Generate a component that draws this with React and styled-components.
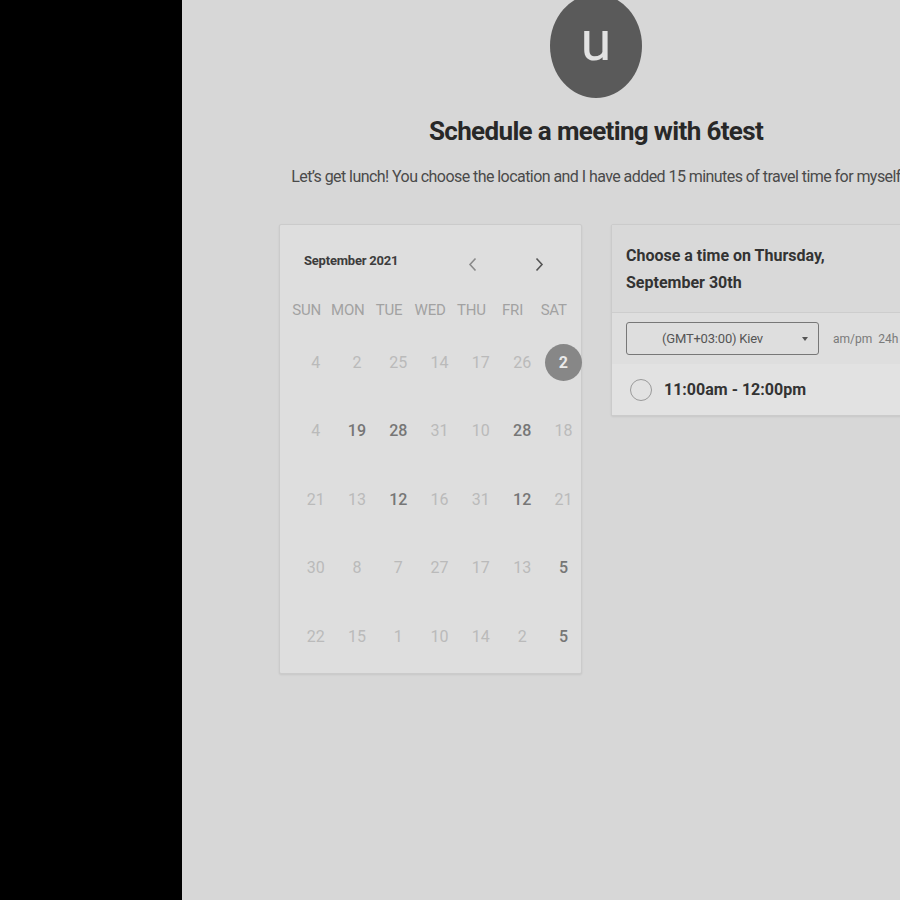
import React from "react";
import styled, { createGlobalStyle } from "styled-components";

const GlobalStyle = createGlobalStyle`
  html, body {
    margin: 0;
    padding: 0;
    background: #d7d7d7;
    overflow: hidden;
    font-family: Roboto, "Liberation Sans", sans-serif;
  }
`;

const Page = styled.div`
  display: flex;
  width: 1010px;
  height: 900px;
`;

const Sidebar = styled.div`
  width: 182px;
  flex-shrink: 0;
  background: #000;
`;

const Main = styled.div`
  width: 828px;
  display: flex;
  flex-direction: column;
  align-items: center;
`;

const Avatar = styled.div`
  width: 92px;
  height: 104px;
  margin-top: -6px;
  border-radius: 50%;
  background: #5a5a5a;
  color: #e2e2e2;
  display: flex;
  align-items: center;
  justify-content: center;
  font-size: 56px;
  line-height: 1;
  padding-bottom: 10px;
  box-sizing: border-box;
`;

const Title = styled.h1`
  margin: 18px 0 0;
  font-size: 26px;
  line-height: 30px;
  font-weight: 700;
  color: #282828;
  letter-spacing: -0.65px;
`;

const Subtitle = styled.p`
  margin: 21px 0 0;
  font-size: 16px;
  line-height: 20px;
  color: #4a4a4a;
  white-space: nowrap;
  letter-spacing: -0.56px;
`;

const Columns = styled.div`
  display: flex;
  gap: 29px;
  margin-top: 37px;
  align-items: flex-start;
`;

const CalendarCard = styled.div`
  width: 303px;
  height: 450px;
  box-sizing: border-box;
  background: #dedede;
  border: 1px solid #cbcbcb;
  border-radius: 2px;
  box-shadow: 0 1px 2px rgba(0, 0, 0, 0.08);
  padding-top: 23px;
`;

const MonthRow = styled.div`
  display: flex;
  align-items: center;
  height: 24px;
  padding-left: 24px;
`;

const MonthLabel = styled.div`
  font-size: 13px;
  font-weight: 700;
  color: #3c3c3c;
  width: 160px;
  letter-spacing: -0.2px;
`;

const NavButton = styled.div`
  width: 67px;
  display: flex;
  justify-content: center;
  margin-top: 8px;
  margin-left: ${({ $first }) => ($first ? "-25px" : "0")};
`;

const DayHeaderRow = styled.div`
  display: grid;
  grid-template-columns: repeat(7, 41.2px);
  margin-top: 23px;
  padding-left: 6px;
  height: 30px;
  align-items: center;
`;

const DayHeader = styled.div`
  text-align: center;
  font-size: 15px;
  color: #a2a2a2;
  letter-spacing: -0.2px;
`;

const DateGrid = styled.div`
  display: grid;
  grid-template-columns: repeat(7, 41.3px);
  grid-auto-rows: 68.5px;
  margin-top: 3px;
  padding-left: 15px;
`;

const DateCell = styled.div`
  display: flex;
  align-items: center;
  justify-content: center;
  font-size: 16px;
  font-weight: ${({ $bold }) => ($bold ? 500 : 400)};
  color: ${({ $bold }) => ($bold ? "#767676" : "#bababa")};
`;

const SelectedDay = styled.div`
  width: 37px;
  height: 37px;
  border-radius: 50%;
  background: #878787;
  color: #eaeaea;
  font-weight: 700;
  display: flex;
  align-items: center;
  justify-content: center;
  font-size: 16px;
`;

const TimePanel = styled.div`
  width: 302px;
  box-sizing: border-box;
  background: #dedede;
  border: 1px solid #cbcbcb;
  border-radius: 2px;
  box-shadow: 0 1px 2px rgba(0, 0, 0, 0.08);
`;

const PanelHeader = styled.div`
  background: #d9d9d9;
  padding: 17px 14px 16px;
  font-size: 16px;
  line-height: 27px;
  font-weight: 700;
  color: #333;
  border-bottom: 1px solid #cdcdcd;
`;

const ZoneRow = styled.div`
  display: flex;
  align-items: center;
  padding: 9px 14px 9px;
  gap: 14px;
`;

const ZoneSelect = styled.div`
  width: 193px;
  height: 33px;
  flex-shrink: 0;
  box-sizing: border-box;
  border: 1px solid #777;
  border-radius: 3px;
  display: flex;
  align-items: center;
  position: relative;
  font-size: 13px;
  color: #555;
  letter-spacing: -0.2px;
`;

const ZoneText = styled.span`
  flex: 1;
  text-align: center;
  padding-right: 20px;
`;

const Caret = styled.span`
  position: absolute;
  right: 10px;
  top: 14px;
  width: 0;
  height: 0;
  border-left: 3.5px solid transparent;
  border-right: 3.5px solid transparent;
  border-top: 4px solid #555;
`;

const FormatToggle = styled.div`
  font-size: 12px;
  color: #7a7a7a;
  word-spacing: 3px;
  white-space: nowrap;
`;

const SlotRow = styled.div`
  display: flex;
  align-items: center;
  height: 51px;
  background: #e2e2e2;
  padding-left: 18px;
  gap: 12px;
`;

const Radio = styled.div`
  width: 20px;
  height: 20px;
  border-radius: 50%;
  border: 1.5px solid #9a9a9a;
`;

const SlotLabel = styled.div`
  font-size: 16px;
  font-weight: 700;
  color: #333;
`;

const days = ["SUN", "MON", "TUE", "WED", "THU", "FRI", "SAT"];

const weeks = [
  ["4", "2", "25", "14", "17", "26", "2*"],
  ["4", "19b", "28b", "31", "10", "28b", "18"],
  ["21", "13", "12b", "16", "31", "12b", "21"],
  ["30", "8", "7", "27", "17", "13", "5b"],
  ["22", "15", "1", "10", "14", "2", "5b"],
];

function Chevron({ left, color }) {
  return (
    <svg width="9" height="15" viewBox="0 0 9 15">
      <path
        d={left ? "M7.5 1.5 L2 7.5 L7.5 13.5" : "M1.5 1.5 L7 7.5 L1.5 13.5"}
        fill="none"
        stroke={color}
        strokeWidth="1.6"
      />
    </svg>
  );
}

function App() {
  return (
    <Page>
      <GlobalStyle />
      <Sidebar />
      <Main>
        <Avatar>u</Avatar>
        <Title>Schedule a meeting with 6test</Title>
        <Subtitle>
          Let’s get lunch! You choose the location and I have added 15 minutes
          of travel time for myself
        </Subtitle>
        <Columns>
          <CalendarCard>
            <MonthRow>
              <MonthLabel>September 2021</MonthLabel>
              <NavButton $first>
                <Chevron left color="#8a8a8a" />
              </NavButton>
              <NavButton>
                <Chevron color="#555" />
              </NavButton>
            </MonthRow>
            <DayHeaderRow>
              {days.map((d) => (
                <DayHeader key={d}>{d}</DayHeader>
              ))}
            </DayHeaderRow>
            <DateGrid>
              {weeks.map((week, i) =>
                week.map((v, j) => {
                  if (v.endsWith("*")) {
                    return (
                      <DateCell key={i + "-" + j}>
                        <SelectedDay>{v.slice(0, -1)}</SelectedDay>
                      </DateCell>
                    );
                  }
                  const bold = v.endsWith("b");
                  return (
                    <DateCell key={i + "-" + j} $bold={bold}>
                      {bold ? v.slice(0, -1) : v}
                    </DateCell>
                  );
                })
              )}
            </DateGrid>
          </CalendarCard>
          <TimePanel>
            <PanelHeader>
              Choose a time on Thursday,
              <br />
              September 30th
            </PanelHeader>
            <ZoneRow>
              <ZoneSelect>
                <ZoneText>(GMT+03:00) Kiev</ZoneText>
                <Caret />
              </ZoneSelect>
              <FormatToggle>am/pm 24h</FormatToggle>
            </ZoneRow>
            <SlotRow>
              <Radio />
              <SlotLabel>11:00am - 12:00pm</SlotLabel>
            </SlotRow>
          </TimePanel>
        </Columns>
      </Main>
    </Page>
  );
}

export default App;
